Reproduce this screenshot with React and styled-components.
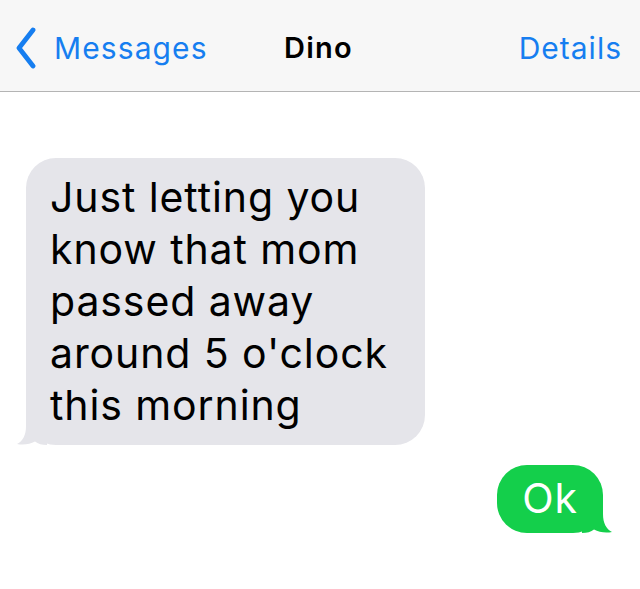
import React from "react";
import styled, { createGlobalStyle } from "styled-components";

const GlobalStyle = createGlobalStyle`
  html, body { margin: 0; padding: 0; background: #ffffff; }
  body { font-family: Inter, "Liberation Sans", Arial, sans-serif; }
  * { box-sizing: border-box; }
`;

const Screen = styled.div`
  width: 640px;
  min-height: 589px;
  background: #ffffff;
  display: flex;
  flex-direction: column;
`;

const NavBar = styled.header`
  height: 92px;
  background: #f7f7f7;
  border-bottom: 1px solid #b4b4b4;
  display: grid;
  grid-template-columns: 1fr auto 1fr;
  align-items: center;
  padding: 4px 18px 0 15px;
`;

const BackButton = styled.div`
  display: flex;
  align-items: center;
  gap: 17px;
  color: #167ef0;
  font-size: 30px;
  letter-spacing: 1.1px;
`;

const Title = styled.div`
  font-size: 29px;
  font-weight: 600;
  letter-spacing: 1.3px;
  color: #000;
`;

const NavAction = styled.div`
  justify-self: end;
  color: #167ef0;
  font-size: 30px;
  letter-spacing: 1px;
`;

const Thread = styled.main`
  display: flex;
  flex-direction: column;
  padding: 66px 37px 0 26px;
  gap: 20px;
`;

const Bubble = styled.div`
  position: relative;
  align-self: ${(p) => (p.$mine ? "flex-end" : "flex-start")};
  background: ${(p) => (p.$mine ? "#14cf4b" : "#e5e5ea")};
  color: ${(p) => (p.$mine ? "#ffffff" : "#000000")};
  border-radius: 30px;
  font-size: 41px;
  line-height: 52px;
  letter-spacing: 0.9px;
  white-space: pre-line;
  padding: ${(p) => (p.$mine ? "7px 25px 9px 25px" : "13px 30px 14px 24px")};
  width: ${(p) => p.$width || "auto"};
`;

const Tail = styled.svg`
  position: absolute;
  bottom: 0;
  width: 30px;
  height: 30px;
  ${(p) => (p.$mine ? "right: -9px; transform: scaleX(-1);" : "left: -9px;")}
`;

function BubbleTail({ mine, color }) {
  return (
    <Tail $mine={mine} viewBox="0 0 30 30" aria-hidden="true">
      <path
        d="M9 0 L30 0 L30 30 C25 30 21 29 18 26.5 C13 29 7 30.5 0 29 C6 26 9 20 9 11 Z"
        fill={color}
      />
    </Tail>
  );
}

export default function App() {
  return (
    <>
      <GlobalStyle />
      <Screen>
        <NavBar>
          <BackButton>
            <svg width="22" height="42" viewBox="0 0 22 42" aria-hidden="true">
              <polyline
                points="18,3 4,21 18,39"
                fill="none"
                stroke="#167ef0"
                strokeWidth="4.8"
                strokeLinecap="round"
                strokeLinejoin="round"
              />
            </svg>
            <span>Messages</span>
          </BackButton>
          <Title>Dino</Title>
          <NavAction>Details</NavAction>
        </NavBar>
        <Thread>
          <Bubble $width="399px">
            {"Just letting you\nknow that mom\npassed away\naround 5 o'clock\nthis morning"}
            <BubbleTail color="#e5e5ea" />
          </Bubble>
          <Bubble $mine>
            Ok
            <BubbleTail mine color="#14cf4b" />
          </Bubble>
        </Thread>
      </Screen>
    </>
  );
}
